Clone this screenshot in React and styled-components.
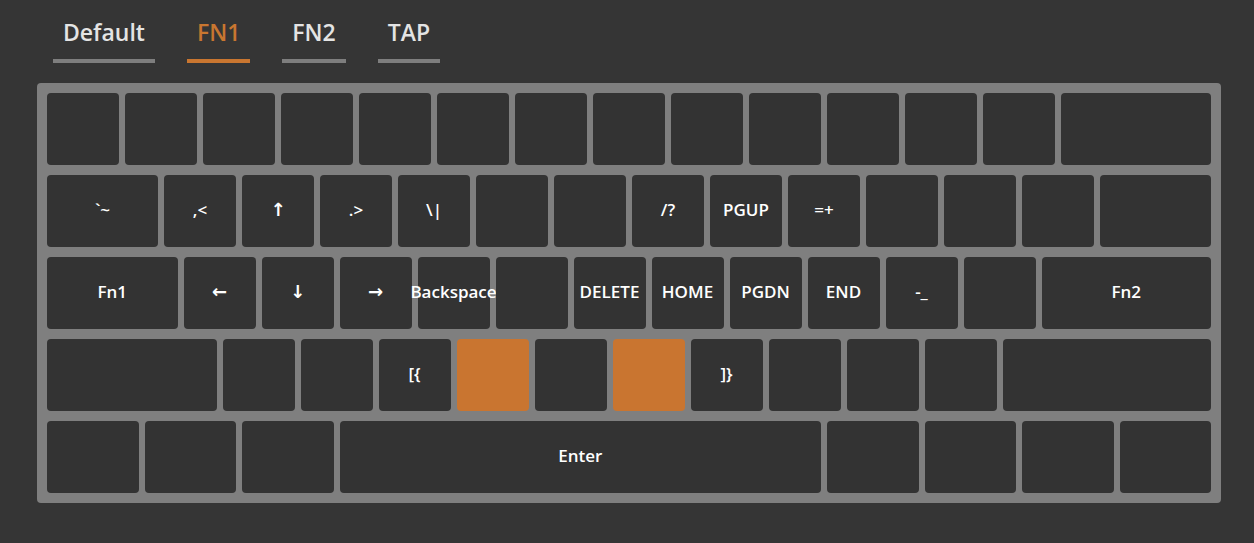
import React, { useState } from 'react';
import styled, { createGlobalStyle } from 'styled-components';

const GlobalStyle = createGlobalStyle`
  html, body {
    margin: 0;
    padding: 0;
    background: #353535;
  }
  body {
    font-family: 'Open Sans', 'Noto Sans', sans-serif;
    width: 1254px;
    height: 543px;
    overflow: hidden;
  }
`;

const UNIT = 78;
const GAP = 6;

const Page = styled.div`
  padding: 16px 0 0 37px;
`;

const Tabs = styled.div`
  display: flex;
  gap: 32px;
  padding-left: 16px;
`;

const Tab = styled.div`
  padding: 0 10px 11px;
  line-height: 32px;
  font-size: 23px;
  font-weight: 600;
  color: ${p => (p.$active ? '#c97630' : '#e4e4e4')};
  border-bottom: 4px solid ${p => (p.$active ? '#c97630' : '#7e7e7e')};
  cursor: pointer;
`;

const Board = styled.div`
  margin-top: 20px;
  width: 1164px;
  padding: 10px;
  background: #7f7f7f;
  border-radius: 4px;
  display: flex;
  flex-direction: column;
  gap: 10px;
`;

const Row = styled.div`
  display: flex;
  gap: ${GAP}px;
`;

const Key = styled.div`
  flex: none;
  box-sizing: border-box;
  width: ${p => p.$u * UNIT - GAP}px;
  height: 72px;
  padding-bottom: 3px;
  border-radius: 4px;
  background: ${p => (p.$hot ? '#c97530' : '#333333')};
  color: #ffffff;
  font-family: ${p => (p.$glyph ? "'DejaVu Sans', sans-serif" : 'inherit')};
  font-size: ${p => (p.$glyph ? '18px' : '17px')};
  font-weight: ${p => (p.$glyph ? 700 : 600)};
  display: flex;
  align-items: center;
  justify-content: center;
  white-space: nowrap;
`;

const k = (label = '', u = 1, hot = false) => ({ label, u, hot });
const blanks = n => Array.from({ length: n }, () => k());
const arrows = ['↑', '↓', '←', '→'];

const rows = [
  [...blanks(13), k('', 2)],
  [
    k('`~', 1.5), k(',<'), k('↑'), k('.>'), k('\\|'), k(), k(), k('/?'),
    k('PGUP'), k('=+'), k(), k(), k(), k('', 1.5),
  ],
  [
    k('Fn1', 1.75), k('←'), k('↓'), k('→'), k('Backspace'), k(), k('DELETE'),
    k('HOME'), k('PGDN'), k('END'), k('-_'), k(), k('Fn2', 2.25),
  ],
  [
    k('', 2.25), k(), k(), k('[{'), k('', 1, true), k(), k('', 1, true),
    k(']}'), k(), k(), k(), k('', 2.75),
  ],
  [
    k('', 1.25), k('', 1.25), k('', 1.25), k('Enter', 6.25),
    k('', 1.25), k('', 1.25), k('', 1.25), k('', 1.25),
  ],
];

const tabs = ['Default', 'FN1', 'FN2', 'TAP'];

export default function App() {
  const [layer, setLayer] = useState('FN1');

  return (
    <Page>
      <GlobalStyle />
      <Tabs>
        {tabs.map(t => (
          <Tab key={t} $active={layer === t} onClick={() => setLayer(t)}>
            {t}
          </Tab>
        ))}
      </Tabs>
      <Board>
        {rows.map((row, i) => (
          <Row key={i}>
            {row.map((key, j) => (
              <Key
                key={j}
                $u={key.u}
                $hot={key.hot}
                $glyph={arrows.includes(key.label)}
              >
                {key.label}
              </Key>
            ))}
          </Row>
        ))}
      </Board>
    </Page>
  );
}
